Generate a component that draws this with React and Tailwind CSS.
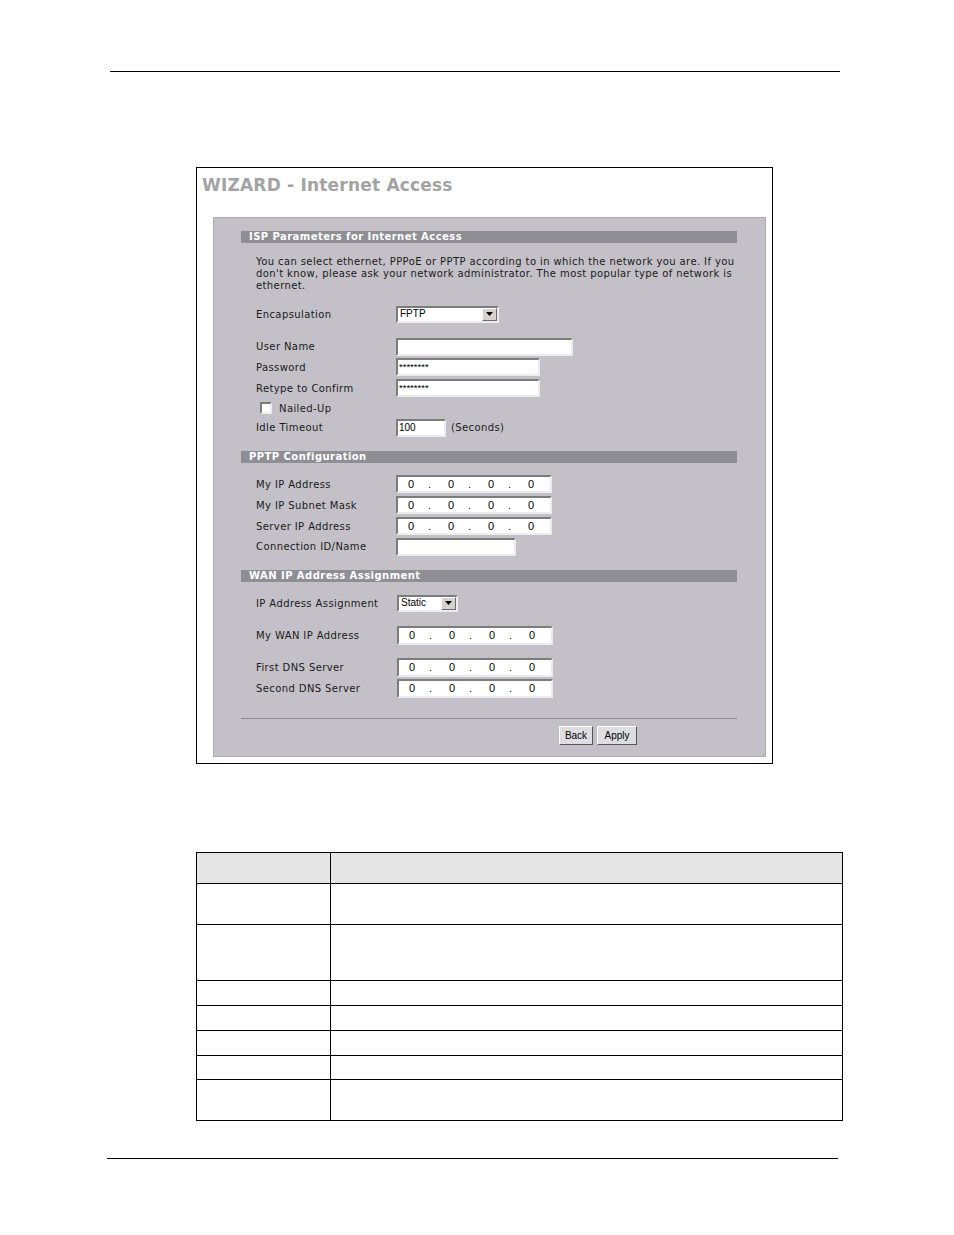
import React from "react";

const formFont = { fontFamily: '"DejaVu Sans", Verdana, sans-serif' };
const ctrlFont = { fontFamily: '"Liberation Sans", Arial, sans-serif' };

// sunken white box like an old Windows text field
function Field({ w, h, children, className = "" }) {
  return (
    <div
      className={`bg-white border-2 border-t-[#7c7c7c] border-l-[#7c7c7c] border-b-[#ecebef] border-r-[#ecebef] flex items-center text-[10px] text-black ${className}`}
      style={{ ...ctrlFont, width: w, height: h }}
    >
      {children}
    </div>
  );
}

function IpBox({ h = 18 }) {
  const parts = ["0", ".", "0", ".", "0", ".", "0"];
  return (
    <Field w={156} h={h} className="pl-[10px]">
      {parts.map((p, i) => (
        <span key={i} className="w-[20px] text-[11px] leading-none">
          {p}
        </span>
      ))}
    </Field>
  );
}

function Select({ w, value }) {
  return (
    <Field w={w} h={17} className="justify-between pl-[2px] pr-0">
      <span className="text-[10px] leading-none">{value}</span>
      <div className="w-[15px] h-[13px] bg-[#d6d3ce] border border-t-white border-l-white border-b-[#6b6b6b] border-r-[#6b6b6b] flex items-center justify-center">
        <svg width="7" height="4" viewBox="0 0 7 4">
          <path d="M0 0h7L3.5 4z" fill="#000" />
        </svg>
      </div>
    </Field>
  );
}

function SectionHead({ children, mt }) {
  return (
    <div
      className={`h-[12px] bg-[#8f8e94] text-white font-bold text-[10px] tracking-[0.45px] leading-[12px] pl-[8px] ${mt}`}
    >
      {children}
    </div>
  );
}

function Row({ label, mt, h, children }) {
  return (
    <div className={`flex items-center pl-[15px] ${mt}`} style={{ height: h }}>
      <div className="w-[140px] text-[10px] tracking-[0.4px] text-[#1a1a1a] shrink-0">{label}</div>
      {children}
    </div>
  );
}

function WinButton({ children, w }) {
  return (
    <div
      className="h-[19px] bg-[#dedde2] border border-t-white border-l-white border-b-[#555] border-r-[#555] flex items-center justify-center text-[10px] text-black"
      style={{ ...ctrlFont, width: w }}
    >
      {children}
    </div>
  );
}

function WizardShot() {
  return (
    <div className="ml-[196px] mt-[95px] w-[577px] h-[597px] border border-black bg-white" style={formFont}>
      <div className="h-[49px] pl-[5px] pt-[7px]">
        <div className="text-[17px] leading-[20px] font-bold tracking-[0.2px] text-[#a3a3a3]">WIZARD - Internet Access</div>
      </div>
      <div className="ml-[16px] w-[553px] h-[540px] bg-[#c3c1c7] border border-[#aeacb2] px-[27px] pt-[13px]">
        <div className="w-[496px]">
          <SectionHead mt="">ISP Parameters for Internet Access</SectionHead>
          <div className="mt-[13px] pl-[15px] text-[10px] tracking-[0.4px] leading-[12px] text-[#1a1a1a] h-[36px]">
            <div className="whitespace-nowrap">You can select ethernet, PPPoE or PPTP according to in which the network you are. If you</div>
            <div className="whitespace-nowrap">don't know, please ask your network administrator. The most popular type of network is</div>
            <div>ethernet.</div>
          </div>
          <Row label="Encapsulation" mt="mt-[14px]" h={16}>
            <Select w={103} value="FPTP" />
          </Row>
          <Row label="User Name" mt="mt-[16px]" h={17}>
            <Field w={177} h={18} />
          </Row>
          <Row label="Password" mt="mt-[3px]" h={18}>
            <Field w={144} h={18} className="pl-[1px]">
              <span className="text-[9.5px] leading-none">********</span>
            </Field>
          </Row>
          <Row label="Retype to Confirm" mt="mt-[3px]" h={18}>
            <Field w={144} h={18} className="pl-[1px]">
              <span className="text-[9.5px] leading-none">********</span>
            </Field>
          </Row>
          <div className="mt-[3px] h-[16px] flex items-center pl-[19px]">
            <div className="w-[12px] h-[12px] bg-white border-2 border-t-[#7c7c7c] border-l-[#7c7c7c] border-b-[#ecebef] border-r-[#ecebef]" />
            <span className="ml-[7px] text-[10px] tracking-[0.4px] text-[#1a1a1a]">Nailed-Up</span>
          </div>
          <Row label="Idle Timeout" mt="mt-[3px]" h={17}>
            <Field w={50} h={18} className="pl-[1px]">
              <span className="leading-none">100</span>
            </Field>
            <span className="ml-[5px] text-[10px] tracking-[0.4px] text-[#1a1a1a]">(Seconds)</span>
          </Row>

          <SectionHead mt="mt-[15px]">PPTP Configuration</SectionHead>
          <Row label="My IP Address" mt="mt-[12px]" h={18}>
            <IpBox />
          </Row>
          <Row label="My IP Subnet Mask" mt="mt-[3px]" h={18}>
            <IpBox />
          </Row>
          <Row label="Server IP Address" mt="mt-[3px]" h={18}>
            <IpBox />
          </Row>
          <Row label="Connection ID/Name" mt="mt-[3px]" h={17}>
            <Field w={120} h={18} />
          </Row>

          <SectionHead mt="mt-[15px]">WAN IP Address Assignment</SectionHead>
          <Row label="IP Address Assignment" mt="mt-[13px]" h={16}>
            <div className="ml-[1px]">
              <Select w={61} value="Static" />
            </div>
          </Row>
          <Row label="My WAN IP Address" mt="mt-[15px]" h={19}>
            <div className="ml-[1px]">
              <IpBox h={19} />
            </div>
          </Row>
          <Row label="First DNS Server" mt="mt-[13px]" h={19}>
            <div className="ml-[1px]">
              <IpBox h={19} />
            </div>
          </Row>
          <Row label="Second DNS Server" mt="mt-[2px]" h={19}>
            <div className="ml-[1px]">
              <IpBox h={19} />
            </div>
          </Row>

          <div className="mt-[20px] border-t border-[#8c8a8f]" />
          <div className="mt-[7px] flex justify-end gap-[4px] pr-[100px]">
            <WinButton w={34}>Back</WinButton>
            <WinButton w={40}>Apply</WinButton>
          </div>
        </div>
      </div>
    </div>
  );
}

function DescTable() {
  const rows = [41, 56, 25, 25, 25, 24, 41];
  return (
    <table className="ml-[196px] mt-[88px] w-[647px] border-collapse">
      <tbody>
        <tr className="h-[31px] bg-[#e6e6e6]">
          <td className="w-[134px] border-[1.5px] border-black" />
          <td className="border-[1.5px] border-black" />
        </tr>
        {rows.map((h, i) => (
          <tr key={i} style={{ height: h }}>
            <td className="border-[1.5px] border-black" />
            <td className="border-[1.5px] border-black" />
          </tr>
        ))}
      </tbody>
    </table>
  );
}

export default function App() {
  return (
    <div className="w-[954px] h-[1235px] bg-white overflow-hidden">
      <div className="pt-[71px] pl-[110px]">
        <div className="w-[730px] border-t-[1.5px] border-black" />
      </div>
      <WizardShot />
      <DescTable />
      <div className="mt-[37px] ml-[107px] w-[731px] border-t-[1.5px] border-black" />
    </div>
  );
}
